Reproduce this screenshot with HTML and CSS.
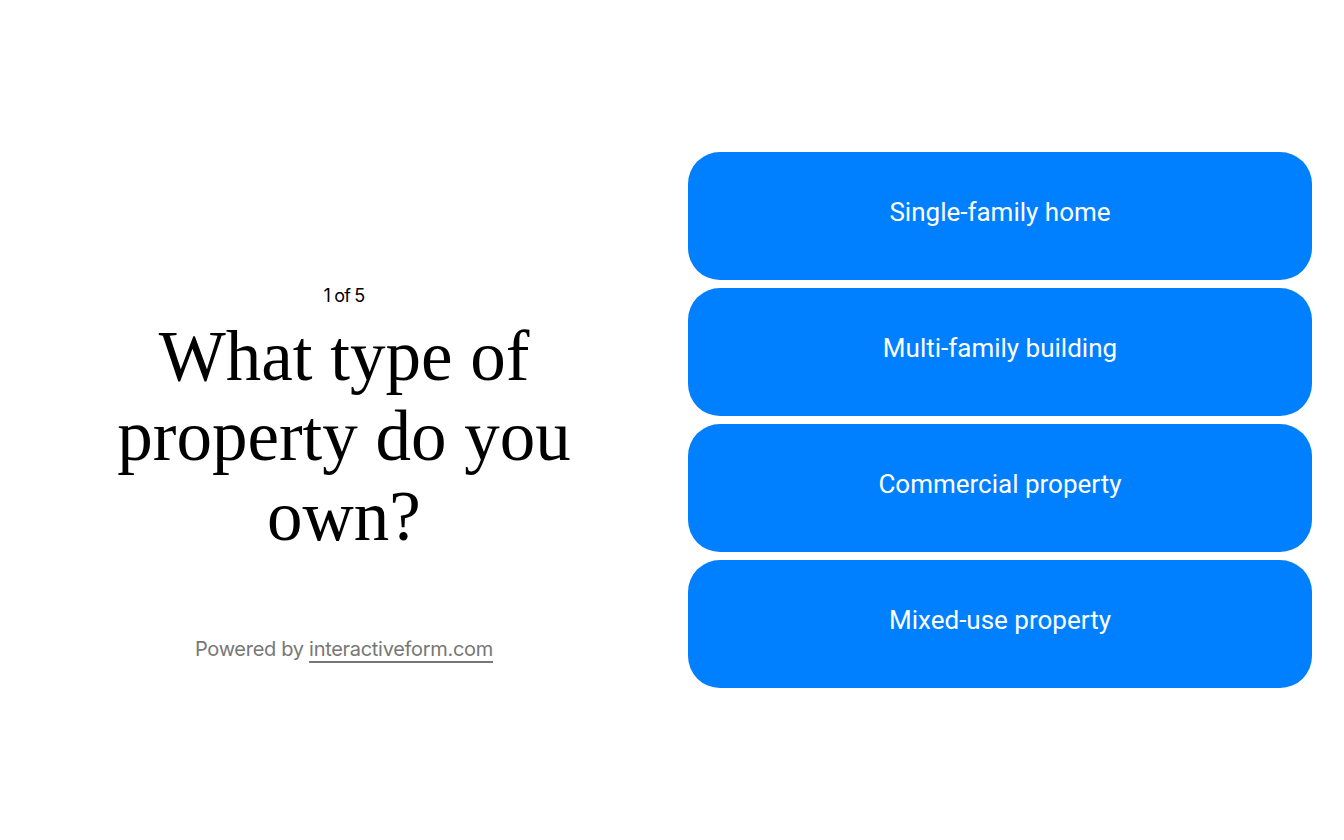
FILE: index.html
```html
<!DOCTYPE html>
<html lang="en">
<head>
  <meta charset="UTF-8" />
  <meta name="viewport" content="width=device-width, initial-scale=1.0"/>
  <title>Property survey</title>
  <link rel="stylesheet" href="styles.css">
</head>
<body>
  <div class="form_page">
    <div class="question_side">
      <p class="step_count">1 of 5</p>
      <h1 class="question_title">What type of property do you own?</h1>
      <p class="powered_by">Powered by <a href="#">interactiveform.com</a></p>
    </div>

    <div class="answer_list">
      <button class="answer_button">Single-family home</button>
      <button class="answer_button">Multi-family building</button>
      <button class="answer_button">Commercial property</button>
      <button class="answer_button">Mixed-use property</button>
    </div>
  </div>
</body>
</html>
```

FILE: styles.css
```css
body {
  margin: 0;
  background-color: #ffffff;
  font-family: Inter, "Liberation Sans", sans-serif;
}

.form_page {
  display: grid;
  grid-template-columns: 1fr 1fr;
  gap: 32px;
  padding: 0 32px;
  height: 840px;
  align-items: center;
}

.question_side {
  align-self: start;
  text-align: center;
  padding-top: 285px;
}

.step_count {
  margin: 0;
  font-size: 18px;
  letter-spacing: -0.8px;
  color: #000000;
}

.question_title {
  margin: 10px 0 0;
  font-family: "Liberation Serif", serif;
  font-weight: normal;
  font-size: 71px;
  line-height: 80px;
}

.powered_by {
  margin: 81px 0 0;
  font-size: 20px;
  letter-spacing: -0.3px;
  color: #777777;
}

.powered_by a {
  color: #777777;
  text-decoration: underline;
  text-decoration-thickness: 2px;
  text-underline-offset: 5px;
}

.answer_list {
  display: flex;
  flex-direction: column;
  gap: 8px;
}

.answer_button {
  height: 128px;
  padding-bottom: 10px;
  border: none;
  border-radius: 32px;
  background-color: #007fff;
  color: #ffffff;
  font-family: Roboto, "Liberation Sans", sans-serif;
  font-size: 26px;
  cursor: pointer;
}
```
